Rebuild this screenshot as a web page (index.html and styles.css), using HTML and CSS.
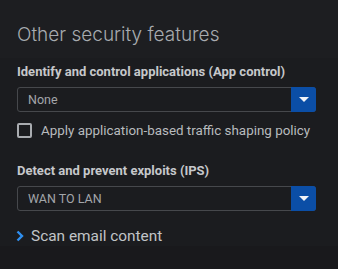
FILE: index.html
```html
<!DOCTYPE html>
<html lang="en">
<head>
    <meta charset="UTF-8">
    <title>Other security features</title>
    <link rel="stylesheet" href="styles.css">
</head>
<body>
    <div class="panel">
        <div class="head">
            <h2 class="title">Other security features</h2>
        </div>
        <div class="body">
            <div class="field">
                <label class="label">Identify and control applications (App control)</label>
                <div class="select">
                    <span class="value">None</span>
                    <span class="arrow"></span>
                </div>
            </div>
            <label class="check">
                <span class="box"></span>
                Apply application-based traffic shaping policy
            </label>
            <div class="field">
                <label class="label">Detect and prevent exploits (IPS)</label>
                <div class="select">
                    <span class="value">WAN TO LAN</span>
                    <span class="arrow"></span>
                </div>
            </div>
            <div class="expand">
                <svg class="chev" width="8" height="12" viewBox="0 0 8 12">
                    <path d="M1.5 1.5 L6 6 L1.5 10.5" fill="none" stroke="#2f8ff0" stroke-width="2.4"/>
                </svg>
                Scan email content
            </div>
        </div>
        <div class="foot"></div>
    </div>
</body>
</html>
```

FILE: styles.css
```css
* {
    margin: 0;
    padding: 0;
    box-sizing: border-box;
}
body {
    background-color: #1b1c1f;
    font-family: Roboto, "Liberation Sans", sans-serif;
    color: #b8bbbe;
}
.head {
    height: 58px;
    padding: 24px 0 0 17px;
    background-color: #1d1e21;
}
.title {
    font-family: Inter, Roboto, sans-serif;
    font-size: 19px;
    font-weight: 300;
    color: #a7abaf;
    line-height: 22px;
}
.body {
    height: 188px;
    padding: 6px 22px 0 17px;
}
.label {
    display: block;
    font-size: 13px;
    font-weight: 700;
    color: #c6c8cb;
    line-height: 16px;
    margin-bottom: 7px;
}
.select {
    display: flex;
    height: 25px;
    border: 1px solid #46484c;
    border-radius: 3px;
}
.value {
    flex: 1;
    padding-left: 10px;
    font-size: 12.5px;
    line-height: 23px;
    color: #a3a6aa;
}
.arrow {
    width: 25px;
    margin: -1px -1px -1px 0;
    background-color: #0b4ea6;
    border-radius: 0 3px 3px 0;
    position: relative;
}
.arrow:after {
    content: "";
    position: absolute;
    left: 8px;
    top: 10px;
    border-left: 5px solid transparent;
    border-right: 5px solid transparent;
    border-top: 5px solid #f2f4f8;
}
.check {
    display: flex;
    align-items: center;
    gap: 9px;
    margin: 11px 0 25px;
    font-size: 13.4px;
    color: #b8bbbe;
    white-space: nowrap;
}
.box {
    width: 15px;
    height: 15px;
    border: 2px solid #a9acb0;
    border-radius: 2px;
}
.expand {
    display: flex;
    align-items: center;
    gap: 7px;
    margin-top: 16px;
    font-size: 15.4px;
    color: #c1c4c7;
}
.chev {
    margin-left: -1px;
}
.foot {
    height: 23px;
    background-color: #19191c;
}
```
